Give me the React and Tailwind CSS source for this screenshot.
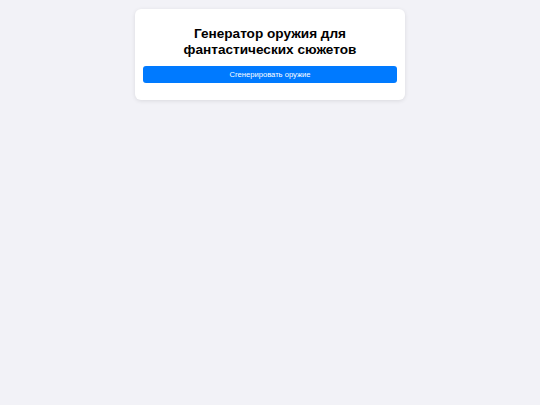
import React from 'react';

const App = () => {
    return (
        <div className="min-h-screen bg-[#f2f2f7] flex justify-center pt-[9px]" style={{ fontFamily: '"Liberation Sans", Arial, sans-serif' }}>
            <div className="w-[270px] h-[91px] bg-white rounded-md shadow-[0_1px_4px_rgba(0,0,0,0.1)] px-2 pt-[17px]">
                <h1 className="text-[13.6px] leading-[15.5px] font-bold text-black text-center mb-[9px]">
                    Генератор оружия для фантастических сюжетов
                </h1>
                <button className="w-full h-[17px] bg-[#007aff] text-white text-[7.6px] rounded-[3px] flex items-center justify-center">
                    Сгенерировать оружие
                </button>
            </div>
        </div>
    );
};

export default App;
